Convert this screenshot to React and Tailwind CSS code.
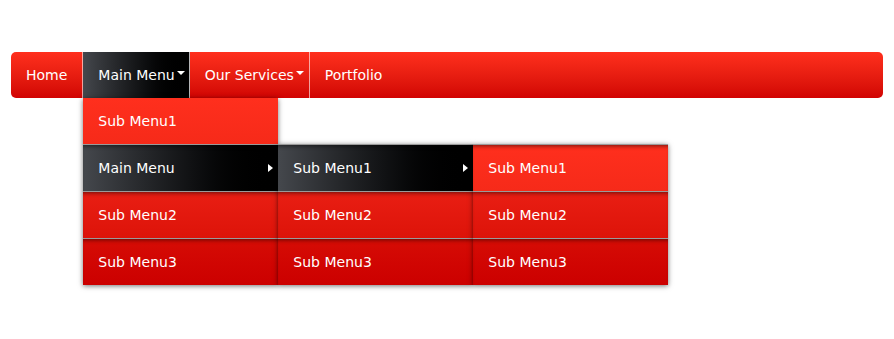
const font = { fontFamily: '"DejaVu Sans", Verdana, sans-serif' };

const rowTones = {
  light: 'bg-gradient-to-b from-[#ff2f1d] to-[#f62a19]',
  mid: 'bg-gradient-to-b from-[#e91e13] to-[#dd1309]',
  deep: 'bg-gradient-to-b from-[#d60c05] to-[#cc0000]',
  dark: 'bg-gradient-to-r from-[#45484d] to-black',
};

function DownCaret() {
  return <span className="ml-[2px] mb-[4px] inline-block border-x-[4px] border-t-[4px] border-x-transparent border-t-white" />;
}

function RightCaret() {
  return <span className="absolute right-[5px] top-1/2 -translate-y-1/2 border-y-[4px] border-l-[5px] border-y-transparent border-l-white" />;
}

function Row({ label, tone, first, arrow, children }) {
  return (
    <li
      className={`relative flex items-center pl-[15px] text-white text-[14px] ${rowTones[tone]} ${
        first ? 'h-[46px]' : 'h-[47px] border-t border-[#9a9a9a] shadow-[inset_0_4px_4px_-3px_rgba(0,0,0,0.55)]'
      }`}
    >
      {label}
      {arrow && <RightCaret />}
      {children}
    </li>
  );
}

function Column({ className, children }) {
  return (
    <ul className={`absolute w-[195px] shadow-[0_1px_5px_rgba(0,0,0,0.55)] z-10 ${className}`}>{children}</ul>
  );
}

export default function App() {
  return (
    <div className="min-h-[339px] bg-white pt-[52px] px-[11px]" style={font}>
      <nav className="h-[46px] rounded-[5px] bg-gradient-to-b from-[#ff2f1d] to-[#d10303]">
        <ul className="flex h-full text-[14px] text-white">
          <li className="flex items-center px-[15px] border-r border-white/60">Home</li>
          <li className="relative flex items-center pl-[15px] pr-[4px] border-r border-white/60 bg-gradient-to-r from-[#45484d] to-black">
            Main Menu
            <DownCaret />
            <Column className="left-0 top-full">
              <Row label="Sub Menu1" tone="light" first />
              <Row label="Main Menu" tone="dark" arrow>
                <Column className="left-full top-[-1px]">
                  <Row label="Sub Menu1" tone="dark" arrow>
                    <Column className="left-full top-[-1px]">
                      <Row label="Sub Menu1" tone="light" />
                      <Row label="Sub Menu2" tone="mid" />
                      <Row label="Sub Menu3" tone="deep" />
                    </Column>
                  </Row>
                  <Row label="Sub Menu2" tone="mid" />
                  <Row label="Sub Menu3" tone="deep" />
                </Column>
              </Row>
              <Row label="Sub Menu2" tone="mid" />
              <Row label="Sub Menu3" tone="deep" />
            </Column>
          </li>
          <li className="flex items-center pl-[15px] pr-[5px] border-r border-white/60">
            Our Services
            <DownCaret />
          </li>
          <li className="flex items-center px-[15px]">Portfolio</li>
        </ul>
      </nav>
    </div>
  );
}
